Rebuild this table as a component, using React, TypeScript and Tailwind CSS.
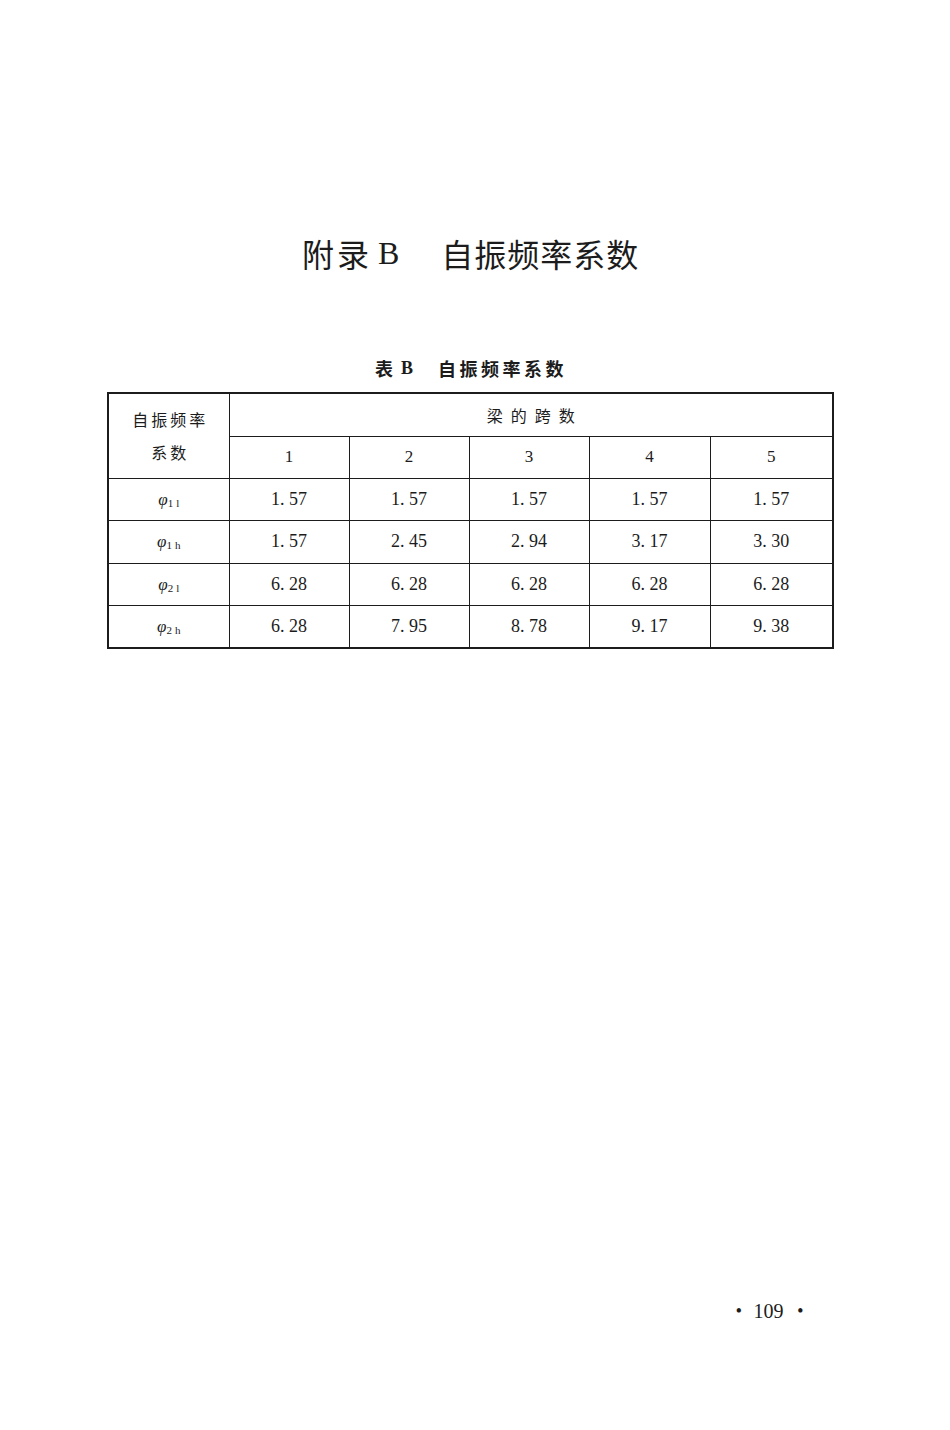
const cjk = '"Noto Sans CJK SC", "Noto Sans", sans-serif';
const serif = '"Liberation Serif", "Noto Sans CJK SC", serif';

const spans = ['1', '2', '3', '4', '5'];

const rows: { sub: string; sub2: string; values: string[] }[] = [
  { sub: '1', sub2: 'l', values: ['1. 57', '1. 57', '1. 57', '1. 57', '1. 57'] },
  { sub: '1', sub2: 'h', values: ['1. 57', '2. 45', '2. 94', '3. 17', '3. 30'] },
  { sub: '2', sub2: 'l', values: ['6. 28', '6. 28', '6. 28', '6. 28', '6. 28'] },
  { sub: '2', sub2: 'h', values: ['6. 28', '7. 95', '8. 78', '9. 17', '9. 38'] },
];

function Phi({ sub, sub2 }: { sub: string; sub2: string }) {
  return (
    <span className="inline-flex items-baseline" style={{ fontFamily: serif }}>
      <span className="text-[17px] italic">φ</span>
      <span className="text-[11px] translate-y-[2px]">{sub}</span>
      <span className="ml-[3px] text-[11px] translate-y-[2px]">{sub2}</span>
    </span>
  );
}

export default function App() {
  return (
    <div className="w-[950px] h-[1430px] bg-white text-[#1c1c1c] flex flex-col">
      <h1
        className="mt-[237px] ml-[302px] text-[32px] leading-[32px] font-normal flex"
        style={{ fontFamily: cjk }}
      >
        <span className="tracking-[3px]">附录</span>
        <span className="ml-[6px]" style={{ fontFamily: serif }}>B</span>
        <span className="ml-[42px] tracking-[1px]">自振频率系数</span>
      </h1>

      <div
        className="mt-[90px] ml-[375px] text-[18px] leading-[18px] font-bold flex"
        style={{ fontFamily: cjk }}
      >
        <span>表</span>
        <span className="ml-[8px]" style={{ fontFamily: serif }}>B</span>
        <span className="ml-[25px] tracking-[3.5px]">自振频率系数</span>
      </div>

      <table className="mt-[15px] ml-[107px] w-[725px] table-fixed border-collapse border-2 border-[#1c1c1c]">
        <colgroup>
          <col className="w-[121px]" />
          <col className="w-[120px]" />
          <col className="w-[120px]" />
          <col className="w-[120px]" />
          <col className="w-[121px]" />
          <col className="w-[123px]" />
        </colgroup>
        <thead>
          <tr className="h-[43px]">
            <td
              rowSpan={2}
              className="border border-[#1c1c1c] text-center align-middle text-[16px] leading-[33px]"
              style={{ fontFamily: cjk }}
            >
              <div className="tracking-[3px] pl-[3px]">自振频率</div>
              <div className="tracking-[3px] pl-[3px]">系数</div>
            </td>
            <td
              colSpan={5}
              className="border border-[#1c1c1c] text-center text-[16px] tracking-[8px] pl-[8px]"
              style={{ fontFamily: cjk }}
            >
              梁的跨数
            </td>
          </tr>
          <tr className="h-[42px]">
            {spans.map((s) => (
              <td
                key={s}
                className="border border-[#1c1c1c] text-center text-[17px]"
                style={{ fontFamily: serif }}
              >
                {s}
              </td>
            ))}
          </tr>
        </thead>
        <tbody>
          {rows.map((r, i) => (
            <tr key={i} className="h-[42.5px]">
              <td className="border border-[#1c1c1c] text-center">
                <Phi sub={r.sub} sub2={r.sub2} />
              </td>
              {r.values.map((v, j) => (
                <td
                  key={j}
                  className="border border-[#1c1c1c] text-center text-[18px] whitespace-pre"
                  style={{ fontFamily: serif }}
                >
                  {v}
                </td>
              ))}
            </tr>
          ))}
        </tbody>
      </table>

      <div
        className="mt-[652px] ml-[736px] flex items-center text-[20px] leading-[20px]"
        style={{ fontFamily: serif }}
      >
        <span className="text-[16px] font-bold">•</span>
        <span className="ml-[12px]">109</span>
        <span className="ml-[14px] text-[16px] font-bold">•</span>
      </div>
    </div>
  );
}
